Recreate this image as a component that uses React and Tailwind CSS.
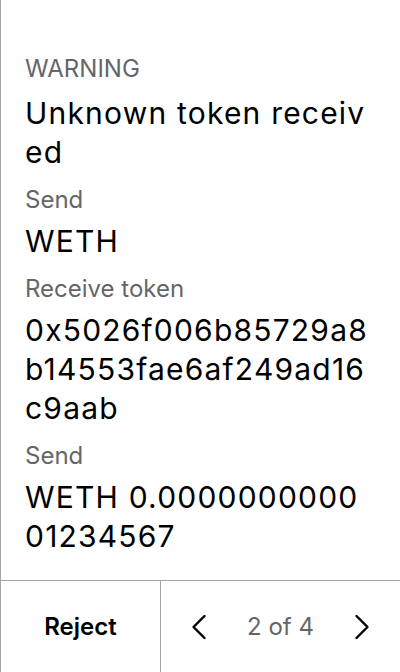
const rows = [
  { label: "Send", value: "WETH" },
  { label: "Receive token", value: "0x5026f006b85729a8b14553fae6af249ad16c9aab" },
  { label: "Send", value: "WETH 0.000000000001234567" },
];

const Chevron = ({ dir }) => (
  <svg width="16" height="26" viewBox="0 0 16 26" fill="none" stroke="currentColor" strokeWidth="2.4" strokeLinecap="round" strokeLinejoin="round">
    {dir === "left" ? <polyline points="13.5,2 2.5,13 13.5,24" /> : <polyline points="2.5,2 13.5,13 2.5,24" />}
  </svg>
);

const App = () => {
  return (
    <div className="h-[672px] w-[400px] flex flex-col bg-white border-l border-[#a6a6a6] font-['Inter',sans-serif] [font-variation-settings:'opsz'_14] text-black">
      {/* Body */}
      <div className="flex-1 px-[24px] pt-[52px]">
        <p className="text-[24px] leading-[34px] text-[#666]">WARNING</p>
        <h1 className="mt-[8px] text-[30px] leading-[39px] tracking-[1.2px] break-all">Unknown token received</h1>

        {rows.map((row, i) => (
          <div key={i}>
            <p className="mt-[11px] text-[24px] leading-[34px] text-[#666]">{row.label}</p>
            <p className="mt-[5px] text-[30px] leading-[39px] tracking-[1.2px] break-all">{row.value}</p>
          </div>
        ))}
      </div>

      {/* Footer */}
      <div className="h-[92px] flex border-t border-[#a6a6a6]">
        <button className="w-[160px] flex items-center justify-center text-[24px] font-semibold border-r border-[#a6a6a6]">
          Reject
        </button>
        <div className="flex-1 flex items-center justify-center">
          <Chevron dir="left" />
          <span className="mx-[40px] text-[24px] text-[#666]">2 of 4</span>
          <Chevron dir="right" />
        </div>
      </div>
    </div>
  );
};

export default App;
